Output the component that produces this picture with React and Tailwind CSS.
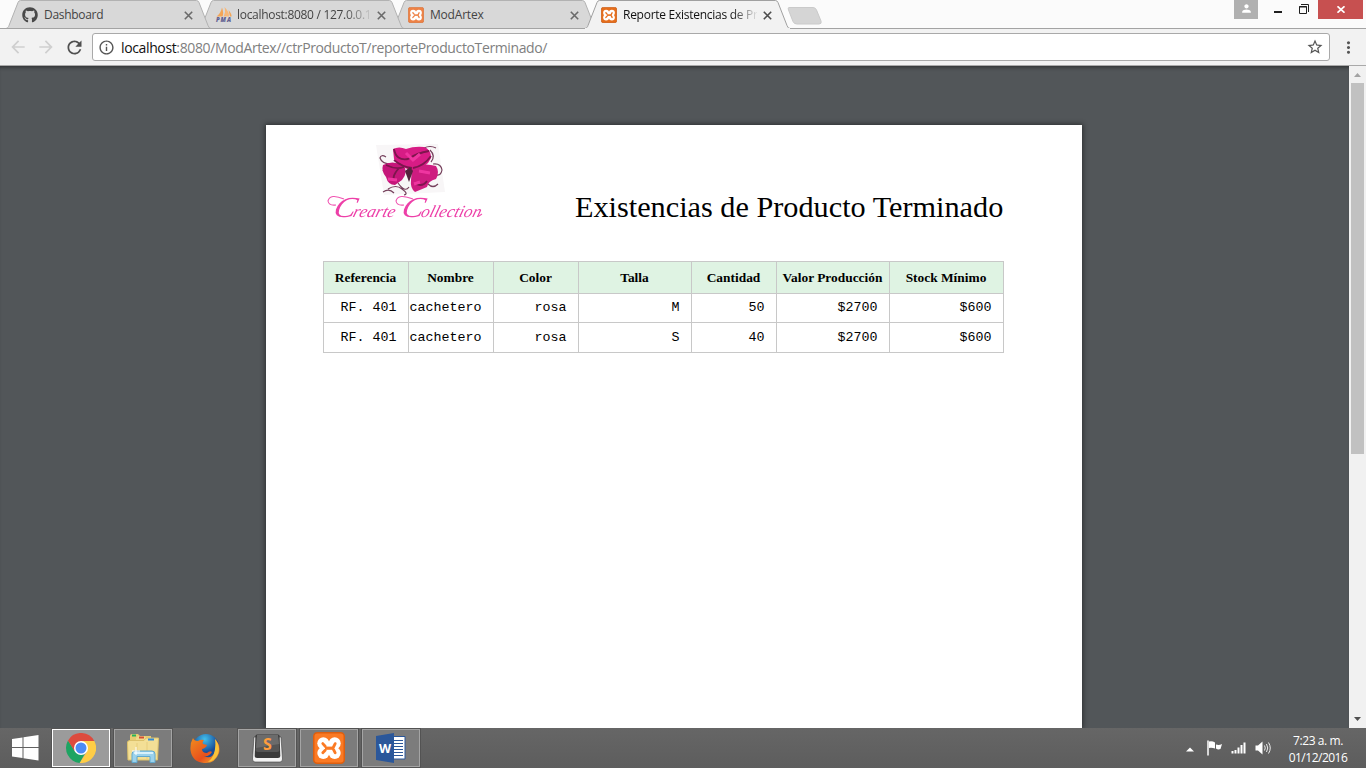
import React from "react";
import { FaGithub } from "react-icons/fa";
import { MdRefresh, MdArrowBack, MdArrowForward, MdStarBorder, MdInfoOutline, MdMoreVert, MdPerson } from "react-icons/md";

const UI = "font-['Open_Sans','Noto_Sans',sans-serif]";

function PmaIcon() {
  return (
    <svg width="18" height="16" viewBox="0 0 18 16" className="block shrink-0">
      <path d="M7 0.500 Q9 6 7.500 9.500 L1.500 9.500 Q6 6 7 0.500Z" fill="#f3a556" />
      <path d="M9.500 0 Q14.500 5 14 9.500 L8.500 9.500 Q11 5 9.500 0Z" fill="#f7b777" />
      <path d="M13.500 3 Q17 7 16.500 9.500 L15 9.500Z" fill="#f3a556" />
      <text x="1" y="15" fontFamily="Open Sans, sans-serif" fontSize="6" fontWeight="800" fontStyle="italic" fill="#5f6091" textLength="15">PMA</text>
    </svg>
  );
}

function XamppIcon({ size, color, edge }) {
  return (
    <svg width={size} height={size} viewBox="0 0 32 32" className="block shrink-0">
      <rect x="0.750" y="0.750" width="30.500" height="30.500" rx="3.500" fill={color} stroke={edge} strokeWidth="1.500" />
      <g fill="#fff">
        <circle cx="10.300" cy="11.300" r="6" />
        <circle cx="10.300" cy="21" r="6" />
        <circle cx="21.700" cy="11.300" r="6" />
        <circle cx="21.700" cy="21" r="6" />
        <path d="M6 13 L10 11.500 H22 L26 13 L25 16.200 L26 19 L22 21.500 H10 L6 19 L7 16.200Z" />
      </g>
      <path d="M9.800 11.600 L12.200 14.200 M9.800 20.800 L12.200 18.200 M22.200 11.600 L20.500 15 M22.200 20.800 L20.500 17.500" stroke={color} strokeWidth="2.800" strokeLinecap="round" />
      <path d="M12 16.200 H20.500" stroke={color} strokeWidth="3.200" />
    </svg>
  );
}

function Tab({ icon, title, active, z, fade, tracking }) {
  return (
    <div className={`relative -mr-3 flex h-[29px] w-[205px] shrink-0 items-center pl-4 ${z}`}>
      <svg width="205" height="29" className="absolute left-0 top-0">
        <path
          d="M0 28.500 C2 28 2.500 27 3 25.500 L12 2.500 Q12.800 0.500 14.500 0.500 L190.500 0.500 Q192 0.500 193 2.500 L202 25.500 Q203 28.500 205 28.500"
          fill={active ? "#f2f2f2" : "#d8d8d8"}
          stroke={active ? "#a0a0a0" : "#b2b2b2"}
        />
        <path d="M0 28.500 H205" stroke={active ? "#f2f2f2" : "#a3a3a3"} />
      </svg>
      <div className="relative mt-[1px] flex w-[18px] justify-start">{icon}</div>
      <div className={`relative ml-1 w-[134px] overflow-hidden whitespace-nowrap text-[12px] ${tracking} ${active ? "text-[#111]" : "text-[#444]"} ${fade ? "[mask-image:linear-gradient(to_right,black_108px,transparent_136px)]" : ""}`}>
        {title}
      </div>
      <svg width="9" height="9" viewBox="0 0 9 9" className="relative ml-[6px] mt-[2px]">
        <path d="M0.800 0.800 L8.200 8.200 M8.200 0.800 L0.800 8.200" stroke={active ? "#4c4c4c" : "#6a6a6a"} strokeWidth="1.600" />
      </svg>
    </div>
  );
}

function TabStrip() {
  return (
    <div className="flex h-[29px] items-start justify-between border-b border-[#a3a3a3] bg-[#fbfbfb]">
      <div className="flex pl-[6px]">
        <Tab z="z-30" tracking="tracking-[-0.300px]" icon={<FaGithub size={16} color="#484848" />} title="Dashboard" />
        <Tab z="z-20" tracking="tracking-[-0.300px]" icon={<PmaIcon />} title="localhost:8080 / 127.0.0.1" fade />
        <Tab z="z-10" tracking="tracking-[-0.200px]" icon={<XamppIcon size={16} color="#ee8246" edge="#d9763d" />} title="ModArtex" />
        <Tab z="z-40" tracking="tracking-[-0.270px]" active icon={<XamppIcon size={16} color="#e66e1c" edge="#c95a12" />} title="Reporte Existencias de Pr" fade />
        <svg width="38" height="18" className="ml-[9px] mt-[7px]">
          <path d="M2 0.500 H26 Q28.500 0.500 29.500 3 L34 14 Q35 17 32 17 H10 Q7 17 6 14.500 L1.500 3 Q0.500 0.500 2 0.500Z" fill="#d5d5d5" stroke="#cacaca" />
        </svg>
      </div>
      <div className="flex h-[19px] items-center">
        <div className="flex h-full w-6 items-start justify-center bg-[#b0b0b0] pt-[2px]">
          <MdPerson size={13} color="#fff" />
        </div>
        <div className="ml-4 mt-[5px] h-[2px] w-2 bg-[#1f1f1f]" />
        <svg width="10" height="10" className="ml-[17px] mt-[-1px]">
          <path d="M0.500 2.500 H7.500 V9.500 H0.500Z M0 3 H8 M2 0.500 H9.500 V8" fill="none" stroke="#1f1f1f" />
        </svg>
        <div className="ml-[9px] mr-[3px] flex h-full w-[45px] items-center justify-center bg-[#c75050]">
          <svg width="8" height="7"><path d="M0.500 0.300 L7.500 6.700 M7.500 0.300 L0.500 6.700" stroke="#fff" strokeWidth="1.700" /></svg>
        </div>
      </div>
    </div>
  );
}

function Toolbar() {
  return (
    <div className="flex h-[37px] items-center border-b border-[#a9a9a9] bg-[#f2f2f2]">
      <MdArrowBack size={20} color="#cfcfcf" className="ml-2" />
      <MdArrowForward size={20} color="#cfcfcf" className="ml-2" />
      <MdRefresh size={21} color="#505050" className="ml-[8px]" />
      <div className="ml-[7px] flex h-7 w-[1238px] items-center rounded-[3px] border border-[#a9a9a9] bg-white pl-[5px] pr-[5px]">
        <MdInfoOutline size={17} color="#555" />
        <div className="ml-[6px] grow text-[14px] tracking-[-0.370px] text-[#808080]">
          <span className="text-[#111]">localhost</span>:8080/ModArtex//ctrProductoT/reporteProductoTerminado/
        </div>
        <MdStarBorder size={18} color="#555" />
      </div>
      <MdMoreVert size={19} color="#555" className="ml-[9px]" />
    </div>
  );
}

function Logo() {
  return (
    <svg width="180" height="84" viewBox="320 140 180 84" className="block">
      <defs>
        <filter id="soft" x="-10%" y="-10%" width="120%" height="120%"><feGaussianBlur stdDeviation="0.75" /></filter>
        <filter id="softText" x="-10%" y="-10%" width="120%" height="120%"><feGaussianBlur stdDeviation="0.35" /></filter>
      </defs>
      <g filter="url(#soft)">
        <path d="M376 145 L438 144 L445 192 L384 195Z" fill="#f8f6f7" />
        <g fill="none" stroke="#75405c" strokeWidth="1.200">
          <path d="M391 164 Q382 164 380 158 Q381 154 386 157 M383 170 Q386 175 391 174 M388 189 Q396 184 402 189 Q409 194 404 195 M383 192 Q389 188 394 193 M424 148 Q430 145 436 148 M433 164 Q441 163 442 170 Q441 176 436 175 M428 184 Q433 189 438 184 M398 183 Q405 193 409 187 M430 150 Q436 156 431 162" />
        </g>
        <path d="M393 149 Q399 146 406 149 Q414 146 424 147 Q431 149 431 158 Q427 168 412 170 Q400 168 394 159Z" fill="#d71c85" />
        <path d="M383 165 Q392 160 403 165 Q409 171 402 180 L395 185 Q388 185 386 177 Q381 171 383 165Z" fill="#c5187a" />
        <path d="M412 168 Q423 162 436 166 Q440 172 436 179 Q428 181 427 187 L415 192 Q410 188 411 180Z" fill="#ce1a80" />
        <path d="M394 149 Q396 161 408 159 Q417 153 429 151 M386 165 Q396 170 404 167 M399 168 Q391 177 395 180 M413 168 Q424 166 431 156 M416 184 Q423 187 427 181 M394 160 Q402 167 412 168" fill="none" stroke="#7d164d" strokeWidth="1.800" />
        <path d="M406 153 L413 160 L420 154 M388 179 L397 180 M414 184 L420 182 M419 171 L430 173" fill="none" stroke="#ef36a0" strokeWidth="3" />
        <path d="M405 171 L409 182 L413 171 L410 167Z" fill="#54243d" />
      </g>
      <g filter="url(#softText)">
        <g fill="#ed3fa8" fontFamily="Liberation Serif, serif" fontStyle="italic">
          <text transform="translate(332 216.500) skewX(-16)" fontSize="29" textLength="22" lengthAdjust="spacingAndGlyphs">C</text>
          <text transform="translate(352 216.500) skewX(-16)" fontSize="17" textLength="42" lengthAdjust="spacingAndGlyphs">rearte</text>
          <text transform="translate(400 216.500) skewX(-16)" fontSize="29" textLength="22" lengthAdjust="spacingAndGlyphs">C</text>
          <text transform="translate(420 216.500) skewX(-16)" fontSize="17" textLength="60" lengthAdjust="spacingAndGlyphs">ollection</text>
        </g>
        <path d="M344 199 Q330 193 328 201 Q329 206 336 205 M413 199 Q398 193 396 201 Q397 206 404 205 M479 216 L482 214" fill="none" stroke="#f155b2" strokeWidth="1.100" />
      </g>
    </svg>
  );
}

const columns = [
  ["Referencia", "w-[85px]"],
  ["Nombre", "w-[85px]"],
  ["Color", "w-[85px]"],
  ["Talla", "w-[113px]"],
  ["Cantidad", "w-[85px]"],
  ["Valor Producción", "w-[113px]"],
  ["Stock Mínimo", "w-[114px]"],
];
const rows = [
  ["RF. 401", "cachetero", "rosa", "M", "50", "$2700", "$600"],
  ["RF. 401", "cachetero", "rosa", "S", "40", "$2700", "$600"],
];

function Report() {
  return (
    <div className="ml-[266px] mt-[59px] h-[603px] w-[816px] bg-white pl-[57px] text-black shadow-[0_0_5px_1px_rgba(0,0,0,0.45)]">
      <div className="flex h-[136px] pt-[15px]">
        <div className="-ml-[3px]"><Logo /></div>
        <h1 className="ml-[75px] mt-[48px] whitespace-nowrap font-['Liberation_Serif',serif] text-[30.250px] leading-[38px]">Existencias de Producto Terminado</h1>
      </div>
      <div className="w-[681px] border-l border-t border-[#c8c8c8]">
        <div className="flex h-8 bg-[#dff3e3] font-['Liberation_Serif',serif] text-[13.400px] font-bold">
          {columns.map(([name, width]) => (
            <div key={name} className={`${width} flex shrink-0 items-center justify-center whitespace-nowrap border-b border-r border-[#c8c8c8] pr-[1px] pt-[2px]`}>{name}</div>
          ))}
        </div>
        {rows.map((row, i) => (
          <div key={i} className={`flex font-['Liberation_Mono',monospace] text-[13.330px] ${i === 0 ? "h-[29px]" : "h-[30px]"}`}>
            {row.map((value, j) => (
              <div key={j} className={`${columns[j][1]} flex shrink-0 items-center justify-end whitespace-pre border-b border-r border-[#c8c8c8] pr-[11.500px]`}>{value}</div>
            ))}
          </div>
        ))}
      </div>
    </div>
  );
}

function Scrollbar() {
  return (
    <div className="flex h-full w-[17px] flex-col items-center bg-[#f1f1f1]">
      <svg width="17" height="17"><path d="M5 11 L8.500 7 L12 11Z" fill="#a3a3a3" /></svg>
      <div className="h-[371px] w-[13px] bg-[#c1c1c1]" />
      <svg width="17" height="17" className="mt-auto"><path d="M5 6 L12 6 L8.500 10Z" fill="#505050" /></svg>
    </div>
  );
}

function Windows() {
  return (
    <svg width="27" height="26" viewBox="0 0 27 26">
      <path d="M0 4 L10.500 2.500 V12 H0Z M11.500 2.300 L26.500 0 V12 H11.500Z M0 13 H10.500 V23 L0 21.500Z M11.500 13 H26.500 V25.500 L11.500 23.200Z" fill="#fff" />
    </svg>
  );
}

function Chrome() {
  return (
    <svg width="30" height="30" viewBox="0 0 30 30">
      <path d="M15 8 H28.300 A15 15 0 0 1 13.500 29.920 L21 18.500Z" fill="#ffcd46" />
      <path d="M2.010 7.500 L9 18.500 Q12 22 18.500 21.200 L13.500 29.920 A15 15 0 0 1 2.010 7.500Z" fill="#1da462" />
      <path d="M2.010 7.500 A15 15 0 0 1 28.300 8 H15 L8.500 18Z" fill="#dd4b3e" />
      <circle cx="15" cy="15" r="7" fill="#fff" />
      <circle cx="15" cy="15" r="5.500" fill="#4c8bf5" />
    </svg>
  );
}

function Explorer() {
  return (
    <svg width="32" height="30" viewBox="0 0 32 30">
      <path d="M3 3 Q3 1 5 1 H11 L13 3 H24 V8 H3Z" fill="#e6cc72" />
      <path d="M5 1.500 H9 V3.500 H5Z" fill="#26b45a" />
      <path d="M9 5 L11 3 H17 L19 5 H29 V10 H9Z" fill="#efd98b" />
      <path d="M12 3.500 H17 V5.500 H12Z" fill="#d34d35" />
      <path d="M0.500 9 Q1 7.500 3 7.500 H17 L19 5 H31.500 L30.500 27 H1Z" fill="#f3df96" stroke="#dcc16a" />
      <path d="M10 10 V26 M20 9 V26" stroke="#e7cd7c" />
      <path d="M21 5.500 H27 V7.500 H21Z" fill="#358bd5" />
      <path d="M5 29.500 V21 Q5 18 8 18 H25 Q28 18 28 21 V29.500 H23 V23.500 H10 V29.500Z" fill="#9bd2ec" stroke="#62a9ce" />
      <path d="M7 20 H26" stroke="#d8f1fb" strokeWidth="2" />
      <path d="M9 14 V22 M5 18 H13" stroke="#fff" strokeWidth="1" />
    </svg>
  );
}

function Firefox() {
  return (
    <svg width="30" height="31" viewBox="0 0 30 31">
      <defs>
        <radialGradient id="globe" cx="45%" cy="20%"><stop offset="0" stopColor="#42c0ed" /><stop offset="1" stopColor="#194d98" /></radialGradient>
        <linearGradient id="fox" x1="0" y1="0" x2="1" y2="1"><stop offset="0" stopColor="#f18c1d" /><stop offset="0.600" stopColor="#e7501d" /><stop offset="1" stopColor="#f8bc32" /></linearGradient>
      </defs>
      <circle cx="16" cy="14" r="13" fill="url(#globe)" />
      <path d="M3 5 Q4 8 8 8 Q11 6 14 7 Q12 9 13 11 L17 12 Q16 15 12 16 Q12 20 17 20 Q20 17 22 19 Q19 24 14 23 Q21 27 25 19 Q28 13 25 6 Q31 12 29 20 Q25 31 14 30 Q2 29 0.500 17 Q0 10 3 5Z" fill="url(#fox)" />
      <path d="M25 6 Q31 13 28 21 Q25 28 18 29 Q27 22 25 6Z" fill="#f9c33a" />
    </svg>
  );
}

function Sublime() {
  return (
    <svg width="31" height="29" viewBox="0 0 31 29">
      <path d="M2 3 L0.500 25 Q0.500 28 3 28 H28 Q30.500 28 30.500 25 L29 3Z" fill="#f3f3f3" stroke="#3b3b3b" strokeWidth="0.600" />
      <path d="M5 0.500 H26 Q27.500 0.500 27.600 2 L28.300 22 Q28.300 24 26 24 H5 Q2.700 24 2.700 22 L3.400 2 Q3.500 0.500 5 0.500Z" fill="#3a3a3a" />
      <path d="M5 1 H26 L27.500 16 Q27.500 18 25 18 H6 Q3.500 18 3.500 16Z" fill="#555" />
      <path d="M5 1 H26 L27 10 L4 14Z" fill="#6b6b6b" />
      <text x="15.500" y="15.500" textAnchor="middle" fontFamily="Open Sans, sans-serif" fontSize="16" fontWeight="700" fill="#ff9d3c">S</text>
    </svg>
  );
}

function Word() {
  return (
    <svg width="30" height="30" viewBox="0 0 30 30">
      <path d="M17 3.500 H29 V26 H17Z" fill="#fff" stroke="#2b579a" />
      <path d="M18 7.500 H27 M18 10.500 H27 M18 13.500 H27 M18 16.500 H27 M18 19.500 H27 M18 22.500 H27" stroke="#2b579a" />
      <path d="M0 3 L18 0 V30 L0 27Z" fill="#2b579a" />
      <text x="9" y="19.500" textAnchor="middle" fontFamily="Open Sans, sans-serif" fontSize="12.500" fontWeight="700" fill="#fff">W</text>
    </svg>
  );
}

function TaskButton({ children, active }) {
  return (
    <div className={`flex h-[40px] w-[60px] shrink-0 items-center justify-center border outline outline-1 -outline-offset-2 ${active ? "border-[#555] bg-[#9b9b9b] outline-white" : "border-[#535353] bg-[#7c7c7c] outline-[#a4a4a4]"}`}>{children}</div>
  );
}

function Taskbar() {
  return (
    <div className="flex h-10 items-center bg-linear-to-b from-[#666] to-[#5d5d5d]">
      <div className="flex w-[51px] items-center pl-[11.500px]"><Windows /></div>
      <div className="flex items-center gap-[2px]">
        <TaskButton active><Chrome /></TaskButton>
        <TaskButton><Explorer /></TaskButton>
        <div className="flex w-[60px] justify-center"><Firefox /></div>
        <TaskButton><Sublime /></TaskButton>
        <TaskButton><XamppIcon size={32} color="#fb7a24" edge="#dd5f10" /></TaskButton>
        <TaskButton><Word /></TaskButton>
      </div>
      <div className="ml-auto flex items-center">
        <svg width="8" height="5" className="mt-[2px]"><path d="M0 4.500 L4 0.500 L8 4.500Z" fill="#fff" /></svg>
        <svg width="17" height="16" viewBox="0 0 17 16" className="ml-[12px]">
          <path d="M2 0.500 V15.500" stroke="#fff" strokeWidth="1.500" />
          <path d="M3 1.500 Q6 0.500 9 2.500 V8.500 Q6 7.500 3 8Z M10 4.500 Q13 5.500 16 4 L14.500 9 Q12 10 10 8.500Z" fill="#fff" />
        </svg>
        <svg width="16" height="12" className="ml-[8px]">
          <path d="M1.500 9 V11.500 M4.500 8 V11.500 M7.500 5.500 V11.500 M10.500 3 V11.500 M13.500 0.500 V11.500" stroke="#fff" strokeWidth="2" />
        </svg>
        <svg width="17" height="14" className="ml-[8px]">
          <path d="M0.500 4.500 H3 L7.500 0.500 V13.500 L3 9.500 H0.500Z" fill="#fff" />
          <path d="M9.500 4.500 Q11 7 9.500 9.500 M11.500 3 Q14 7 11.500 11 M13.500 1.500 Q17 7 13.500 12.500" fill="none" stroke="#eee" />
        </svg>
        <div className="ml-[13px] mr-[15px] w-[66px] whitespace-nowrap pt-[1px] text-center text-[12px] leading-[17px] text-white">
          <div className="tracking-[-0.400px]">7:23 a. m.</div>
          <div className="tracking-[-0.500px]">01/12/2016</div>
        </div>
      </div>
    </div>
  );
}

export default function App() {
  return (
    <div className={`flex h-[768px] w-[1366px] flex-col overflow-hidden ${UI}`}>
      <TabStrip />
      <Toolbar />
      <div className="flex h-[662px] overflow-hidden">
        <div className="h-full grow overflow-hidden bg-[#525659] shadow-[inset_0_4px_4px_-3px_rgba(0,0,0,0.5)]">
          <div className="flex"><Report /></div>
        </div>
        <Scrollbar />
      </div>
      <Taskbar />
    </div>
  );
}
